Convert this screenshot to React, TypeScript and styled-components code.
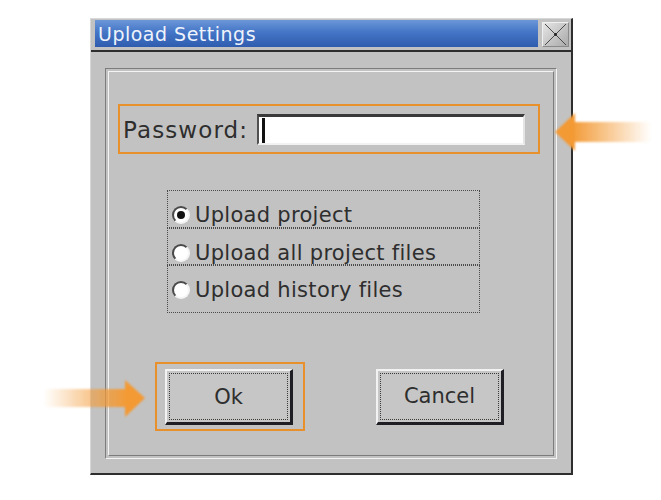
import React from "react";
import styled, { createGlobalStyle } from "styled-components";

const GlobalStyle = createGlobalStyle`
  html, body { margin: 0; padding: 0; background: #ffffff; }
  body { font-family: "DejaVu Sans", Verdana, sans-serif; color: #2e2e2e; }
`;

const Page = styled.div`
  position: relative;
  width: 661px;
  height: 500px;
  padding: 18px 0 0 90px;
  box-sizing: border-box;
  overflow: hidden;
`;

const Dialog = styled.div`
  width: 483px;
  height: 457px;
  box-sizing: border-box;
  background: #c2c2c2;
  border-top: 1px solid #d8d8d8;
  border-left: 1px solid #d8d8d8;
  border-right: 2px solid #2e2e2e;
  border-bottom: 2px solid #2e2e2e;
  display: flex;
  flex-direction: column;
`;

const Header = styled.div`
  height: 33px;
  box-sizing: border-box;
  padding: 1px 2px 0 4px;
  display: flex;
  align-items: flex-start;
  gap: 4px;
  border-bottom: 2px solid #2e2e2e;
`;

const TitleBar = styled.div`
  flex: 1;
  height: 27px;
  background: linear-gradient(#6c97d8 0%, #4475c6 45%, #2f5cae 100%);
  color: #eef3fc;
  font-size: 19px;
  letter-spacing: 0.5px;
  line-height: 28px;
  padding-left: 3px;
  white-space: nowrap;
`;

const CloseButton = styled.div`
  width: 27px;
  height: 25px;
  margin-top: 2px;
  box-sizing: border-box;
  border: 1px solid;
  border-color: #f0f0f0 #8a8a8a #8a8a8a #f0f0f0;
  background: linear-gradient(135deg, #e6e6e6 0%, #c4c4c4 55%, #a9a9a9 100%);
  display: flex;
  align-items: center;
  justify-content: center;
`;

const Body = styled.div`
  flex: 1;
  display: flex;
  padding: 16px 14px 14px 14px;
`;

const Frame = styled.div`
  flex: 1;
  display: flex;
  padding: 2px;
  border: 1px solid;
  border-color: #7c7c7c #f4f4f4 #f4f4f4 #7c7c7c;
`;

const FrameInner = styled.div`
  flex: 1;
  display: flex;
  flex-direction: column;
  align-items: flex-start;
  border: 1px solid;
  border-color: #f4f4f4 #7c7c7c #7c7c7c #f4f4f4;
`;

const PasswordRow = styled.div`
  margin: 32px 0 0 9px;
  width: 422px;
  height: 50px;
  box-sizing: border-box;
  border: 2px solid #e8902c;
  display: flex;
  align-items: center;
  padding: 1px 13px 0 3px;
`;

const FieldLabel = styled.span`
  font-size: 23px;
  letter-spacing: 1.1px;
  color: #2e2e2e;
`;

const TextInput = styled.div`
  margin-left: auto;
  width: 268px;
  height: 31px;
  box-sizing: border-box;
  background: #ffffff;
  border-style: solid;
  border-width: 3px 2px 2px 2px;
  border-color: #3a3a3a #e4e4e4 #f2f2f2 #505050;
  display: flex;
  align-items: center;
  padding-left: 3px;
`;

const Caret = styled.span`
  width: 3px;
  height: 25px;
  background: #111111;
`;

const RadioGroup = styled.div`
  margin: 36px 0 0 58px;
  width: 313px;
  display: flex;
  flex-direction: column;
`;

const RadioRow = styled.div<{ $h: number }>`
  height: ${(p) => p.$h}px;
  box-sizing: border-box;
  border: 1px dotted #4a4a4a;
  padding: 12px 0 0 4px;
  display: flex;
  align-items: flex-start;
  gap: 5px;
`;

const RadioCircle = styled.span<{ $checked?: boolean }>`
  width: 18px;
  height: 18px;
  margin-top: 3px;
  box-sizing: border-box;
  border-radius: 50%;
  border: 2px solid;
  border-color: #4a4a4a #f4f4f4 #f4f4f4 #4a4a4a;
  background: #ffffff;
  display: flex;
  align-items: center;
  justify-content: center;
  &::after {
    content: "";
    width: 8px;
    height: 8px;
    border-radius: 50%;
    background: #111111;
    display: ${(p) => (p.$checked ? "block" : "none")};
  }
`;

const RadioLabel = styled.span`
  font-size: 21px;
  letter-spacing: 0.3px;
  line-height: 24px;
  color: #2e2e2e;
  white-space: nowrap;
`;

const ButtonRow = styled.div`
  margin: 49px 0 0 46px;
  display: flex;
  align-items: center;
  gap: 71px;
`;

const Highlight = styled.div`
  border: 2px solid #e8902c;
  padding: 5px 10px 4px 8px;
  display: flex;
`;

const PushButton = styled.div`
  width: 128px;
  height: 56px;
  box-sizing: border-box;
  background: #c6c6c6;
  border-style: solid;
  border-width: 2px 3px 3px 2px;
  border-color: #f2f2f2 #1e1e24 #1e1e24 #f2f2f2;
  padding: 2px;
  display: flex;
`;

const FocusBox = styled.div`
  flex: 1;
  border: 1px dotted #3a3a3a;
  display: flex;
  align-items: center;
  justify-content: center;
  font-size: 21px;
  color: #2e2e2e;
`;

const ArrowLayer = styled.svg<{ $left: number; $top: number }>`
  position: absolute;
  left: ${(p) => p.$left}px;
  top: ${(p) => p.$top}px;
  overflow: visible;
  pointer-events: none;
`;

function CloseGlyph() {
  return (
    <svg width="25" height="23" viewBox="0 0 25 23">
      <line x1="2" y1="1" x2="23" y2="22" stroke="#4a4a4a" strokeWidth="1" />
      <line x1="23" y1="1" x2="2" y2="22" stroke="#4a4a4a" strokeWidth="1" />
      <circle cx="12.5" cy="11.5" r="1.4" fill="#222" />
    </svg>
  );
}

function RightArrow() {
  return (
    <ArrowLayer $left={553} $top={108} width="100" height="48" viewBox="0 0 100 48">
      <defs>
        <linearGradient id="rShaft" x1="0" y1="0" x2="1" y2="0">
          <stop offset="0" stopColor="#f39a35" stopOpacity="1" />
          <stop offset="1" stopColor="#f39a35" stopOpacity="0" />
        </linearGradient>
        <filter id="rBlur">
          <feGaussianBlur stdDeviation="0.8" />
        </filter>
      </defs>
      <g filter="url(#rBlur)">
        <rect x="18" y="14" width="80" height="20" fill="url(#rShaft)" />
        <polygon points="2,24 22,5 22,43" fill="#f39a35" />
      </g>
    </ArrowLayer>
  );
}

function LeftArrow() {
  return (
    <ArrowLayer $left={40} $top={376} width="108" height="46" viewBox="0 0 108 46">
      <defs>
        <linearGradient id="lShaft" x1="0" y1="0" x2="1" y2="0">
          <stop offset="0" stopColor="#f39a35" stopOpacity="0" />
          <stop offset="1" stopColor="#f39a35" stopOpacity="1" />
        </linearGradient>
        <filter id="lBlur">
          <feGaussianBlur stdDeviation="0.8" />
        </filter>
      </defs>
      <g filter="url(#lBlur)">
        <rect x="4" y="13" width="84" height="18" fill="url(#lShaft)" />
        <polygon points="105,22 85,4 85,41" fill="#f39a35" />
      </g>
    </ArrowLayer>
  );
}

const options = [
  { label: "Upload project", h: 38, checked: true },
  { label: "Upload all project files", h: 37, checked: false },
  { label: "Upload history files", h: 48, checked: false },
];

export default function App() {
  return (
    <>
      <GlobalStyle />
      <Page>
        <Dialog>
          <Header>
            <TitleBar>Upload Settings</TitleBar>
            <CloseButton>
              <CloseGlyph />
            </CloseButton>
          </Header>
          <Body>
            <Frame>
              <FrameInner>
                <PasswordRow>
                  <FieldLabel>Password:</FieldLabel>
                  <TextInput>
                    <Caret />
                  </TextInput>
                </PasswordRow>
                <RadioGroup>
                  {options.map((o) => (
                    <RadioRow key={o.label} $h={o.h}>
                      <RadioCircle $checked={o.checked} />
                      <RadioLabel>{o.label}</RadioLabel>
                    </RadioRow>
                  ))}
                </RadioGroup>
                <ButtonRow>
                  <Highlight>
                    <PushButton>
                      <FocusBox>Ok</FocusBox>
                    </PushButton>
                  </Highlight>
                  <PushButton>
                    <FocusBox>Cancel</FocusBox>
                  </PushButton>
                </ButtonRow>
              </FrameInner>
            </Frame>
          </Body>
        </Dialog>
        <RightArrow />
        <LeftArrow />
      </Page>
    </>
  );
}
